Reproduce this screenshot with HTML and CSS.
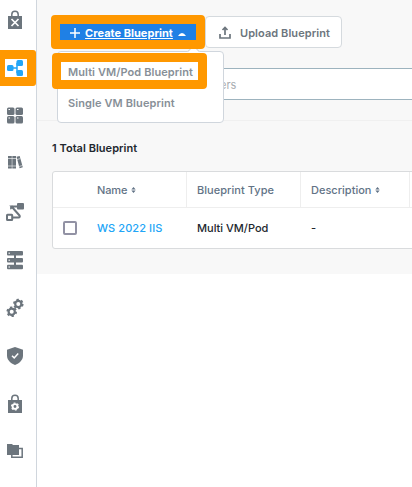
FILE: index.html
```
<!DOCTYPE html>
<html lang="en">
<head>
<meta charset="utf-8">
<title>Blueprints</title>
<link rel="stylesheet" href="styles.css">
</head>
<body>
<div class="app">
  <nav class="sidebar">
    <a class="nav-item"><svg viewBox="0 0 24 24"><path class="line thin" d="M8.800 8V6.500a3.200 3.200 0 0 1 6.400 0V8"/><path d="M5 8h14v13H5z"/><path class="cut" d="M8.500 11l7 7M15.500 11l-7 7"/></svg></a>
    <a class="nav-item nav-item--active"><span class="nav-focus"><svg viewBox="0 0 24 24"><path class="line thin" d="M9 12h5M18 7.500h-4v9h4"/><rect x="4" y="9" width="6.500" height="6" rx="1.500"/><rect x="13.500" y="4" width="6.500" height="6" rx="1.500"/><rect x="13.500" y="14" width="6.500" height="6" rx="1.500"/></svg></span></a>
    <a class="nav-item"><svg viewBox="0 0 24 24"><rect x="4" y="3.500" width="7.500" height="7.500" rx="1.500"/><rect x="12.500" y="3.500" width="7.500" height="7.500" rx="1.500"/><rect x="4" y="12" width="7.500" height="7.500" rx="1.500"/><rect x="12.500" y="12" width="7.500" height="7.500" rx="1.500"/><path class="cut fine" d="M5.500 5.500h1.500M14 5.500h1.500M5.500 14h1.500M14 14h1.500"/></svg></a>
    <a class="nav-item"><svg viewBox="0 0 24 24"><path d="M5 4h3.800v12.500H5zM9.300 4H13v12.500H9.300zM13.500 4.800l3.200-.8 3.100 11.300-3.200 1z"/><path class="cut faint" d="M5 6.500h8M5 14h8M14 7.500l3.300-.9M16 14.500l3.500-1"/></svg></a>
    <a class="nav-item"><svg viewBox="0 0 24 24"><path class="line" d="M15 6.500H8.500L16.500 15.500a1.200 1.200 0 0 1-.9 2H10"/><path class="line" d="M9.500 6.500a1.500 1.500 0 0 0-1 2.600"/><rect x="14" y="3" width="7" height="6.500" rx="1"/><rect class="line" x="4" y="14.800" width="5.200" height="5.200" rx=".5"/></svg></a>
    <a class="nav-item"><svg viewBox="0 0 24 24"><path class="line" d="M12 5v14"/><rect x="4" y="3" width="16" height="4.500" rx="1"/><rect x="4" y="10" width="16" height="4.500" rx="1"/><rect x="4" y="16.700" width="16" height="4.500" rx="1"/><path class="cut fine" d="M5.500 5.200h1.500M5.500 12.200h1.500M5.500 19h1.500"/></svg></a>
    <a class="nav-item"><svg viewBox="0 0 24 24"><g class="gear"><circle cx="15.300" cy="8" r="3.100"/><circle class="teeth" cx="15.300" cy="8" r="4.300"/><circle cx="8.700" cy="15.700" r="3.100"/><circle class="teeth" cx="8.700" cy="15.700" r="4.300"/></g></svg></a>
    <a class="nav-item"><svg viewBox="0 0 24 24"><path d="M12 3l8 2.700v5.800c0 4.500-3.500 7.800-8 9.500-4.500-1.700-8-5-8-9.500V5.700z"/><path class="cut thin" d="M9 11.800l2.200 2.100 4-4.400"/></svg></a>
    <a class="nav-item"><svg viewBox="0 0 24 24"><path class="line thin" d="M8.800 8V6.500a3.200 3.200 0 0 1 6.400 0V8"/><path d="M5 8h14v13H5z"/><circle class="hub" cx="12" cy="14.500" r="2.400"/><circle class="hub-teeth" cx="12" cy="14.500" r="3.500"/></svg></a>
    <a class="nav-item"><svg viewBox="0 0 24 24"><path class="line thin" d="M16 8.500h3.200v8.700H8.800V14"/><path d="M4 4h5l1 1h6v10H4z"/></svg></a>
  </nav>
  <main class="main">
    <header class="toolbar">
      <div class="actions">
        <div class="create">
          <button class="create-btn"><svg class="plus" viewBox="0 0 10 10"><path d="M5 0v10M0 5h10"/></svg><span class="create-text">Create Blueprint</span><svg class="caret" viewBox="0 0 8 3"><path d="M0 3Q2 0 4 0T8 3z"/></svg></button>
          <div class="menu">
            <div class="menu-item menu-item--focus"><span>Multi VM/Pod Blueprint</span></div>
            <div class="menu-item"><span>Single VM Blueprint</span></div>
          </div>
        </div>
        <button class="upload-btn"><svg class="upload-icon" viewBox="0 0 12 13"><path d="M1 8v4h10V8M6 9V2M3.500 4L6 1.500 8.500 4"/></svg><span>Upload Blueprint</span></button>
      </div>
      <div class="search"><span>ers</span></div>
    </header>
    <section class="content">
      <h1 class="total">1 Total Blueprint</h1>
      <div class="table">
        <div class="row head">
          <div class="cell check"></div>
          <div class="cell name"><span class="t-name">Name</span><svg class="sort" viewBox="0 0 5 7"><path d="M0 3L2.500 0 5 3zM0 4h5L2.500 7z"/></svg></div>
          <div class="cell type"><span class="t-type">Blueprint Type</span></div>
          <div class="cell desc"><span>Description</span><svg class="sort" viewBox="0 0 5 7"><path d="M0 3L2.500 0 5 3zM0 4h5L2.500 7z"/></svg></div>
        </div>
        <div class="row">
          <div class="cell check"><span class="box"></span></div>
          <div class="cell name"><a class="link">WS 2022 IIS</a></div>
          <div class="cell type"><span>Multi VM/Pod</span></div>
          <div class="cell desc">-</div>
        </div>
      </div>
    </section>
  </main>
</div>
</body>
</html>
```
FILE: styles.css
```
* { box-sizing: border-box; }
body { margin: 0; background: #fff; font: 500 11px/16px Inter, "Liberation Sans", sans-serif; overflow: hidden; }
button { font: inherit; margin: 0; padding: 0; }
.app { display: flex; width: 412px; height: 487px; overflow: hidden; }
.sidebar { width: 37px; flex: none; border-right: 1px solid #d0d6dd; color: #6c757d; margin-top: -4px; }
.nav-item { display: flex; align-items: center; height: 48px; padding-left: 3px; }
.nav-item svg { width: 24px; height: 24px; fill: currentColor; flex: none; }
.nav-item .line { fill: none; stroke: currentColor; stroke-width: 2; }
.nav-item .line.thin { stroke-width: 1.5; }
.nav-item .cut { fill: none; stroke: #fff; stroke-width: 1.7; }
.nav-item .cut.thin { stroke-width: 1.5; }
.nav-item .cut.fine { stroke-width: 1; }
.nav-item .cut.faint { stroke-width: .6; }
.gear circle { fill: none; stroke: currentColor; stroke-width: 2.2; }
.gear .teeth { stroke-width: 2; stroke-dasharray: 2.25 2.253; }
.hub { fill: none; stroke: #fff; stroke-width: 1.9; }
.nav-item .hub-teeth { fill: none; stroke: #fff; stroke-width: 1.2; stroke-dasharray: 1.83 1.835; }
.nav-item--active { height: 36px; margin: 6px 0; background: #ff9800; border-radius: 0 3px 3px 0; color: #22a5f7; padding-left: 5px; }
.nav-focus { display: flex; align-items: center; justify-content: center; width: 22px; height: 18px; background: #fff; }
.nav-focus svg { margin-right: 2px; }
.main { flex: none; width: 375px; height: 274px; background: #f8f8f8; overflow: hidden; }
.toolbar { height: 121px; padding: 15px 0 0 14px; border-bottom: 1px solid #f0f0f0; }
.actions { display: flex; align-items: flex-start; height: 53px; }
.create { position: relative; width: 154px; }
.create-btn { position: relative; z-index: 3; display: flex; align-items: center; width: 154px; height: 34px; border: 9px solid #ff9800; border-radius: 4px; background: #1f80e5; color: #fff; font-weight: 700; padding: 2px 0 0 10px; }
.plus { width: 10px; height: 10px; stroke: #fff; stroke-width: 1.5; fill: none; margin-right: 5px; flex: none; }
.create-text { width: 88px; letter-spacing: .02px; white-space: nowrap; text-decoration: underline; text-decoration-thickness: 1px; text-underline-offset: 1px; }
.caret { width: 8px; height: 3px; fill: #fff; margin: 2px 0 0 5px; flex: none; }
.menu { position: absolute; z-index: 2; top: 36px; left: 6px; width: 167px; height: 72px; background: #fff; border: 1px solid #d0d6dd; border-radius: 4px; padding-top: 1px; color: #878f97; font-weight: 600; white-space: nowrap; }
.menu::before { content: ""; position: absolute; left: 131px; top: -5px; width: 8px; height: 8px; background: #fff; border: solid #d0d6dd; border-width: 1px 0 0 1px; transform: rotate(45deg); }
.menu-item { display: flex; align-items: center; height: 27px; padding: 1px 0 0 10px; letter-spacing: .1px; }
.menu-item--focus { position: relative; width: 155px; height: 36px; margin-left: -6px; border: 9px solid #ff9800; border-radius: 4px; background: #fff; padding: 2px 0 0 7px; letter-spacing: .08px; }
.upload-btn { display: flex; align-items: center; width: 137px; height: 32px; margin-top: 1px; background: #fff; border: 1px solid #d5dade; border-radius: 4px; color: #6c757d; font-weight: 600; padding: 2px 0 0 13px; white-space: nowrap; letter-spacing: .07px; }
.upload-icon { width: 12px; height: 13px; stroke: currentColor; stroke-width: 1.7; fill: none; margin: 0 9px 1px 0; flex: none; }
.search { height: 32px; width: 380px; margin-left: 7px; background: #fff; border: 1px solid #9db3be; border-radius: 4px; padding: 8px 0 0 161px; line-height: 16px; color: #a9adb1; font-weight: 400; }
.content { padding: 19px 0 0 15px; }
.total { margin: 0 0 15px; font-size: 11px; line-height: 16px; font-weight: 600; letter-spacing: .03px; color: #22272e; }
.table { width: 390px; border: 1px solid #d9dbdd; border-radius: 3px; background: #fff; height: 78px; }
.row { display: flex; height: 40px; }
.head { height: 36px; border-bottom: 1px solid #eee; }
.cell { display: flex; align-items: center; flex: none; padding-left: 10px; white-space: nowrap; }
.row .cell { color: #22272e; }
.head .cell { color: #627386; border-right: 1px solid #eee; }
.head .check { border-right: 0; }
.check { width: 34px; }
.name { width: 100px; }
.type { width: 114px; }
.desc { width: 109px; }
.box { width: 14px; height: 14px; flex: none; border: 2px solid #9292a4; border-radius: 2px; }
.link { color: #22a5f7; letter-spacing: .08px; }
.sort { width: 5px; height: 6px; fill: #627386; margin-left: 4px; }
.t-name { letter-spacing: -.1px; }
.t-type { letter-spacing: .04px; }
```
